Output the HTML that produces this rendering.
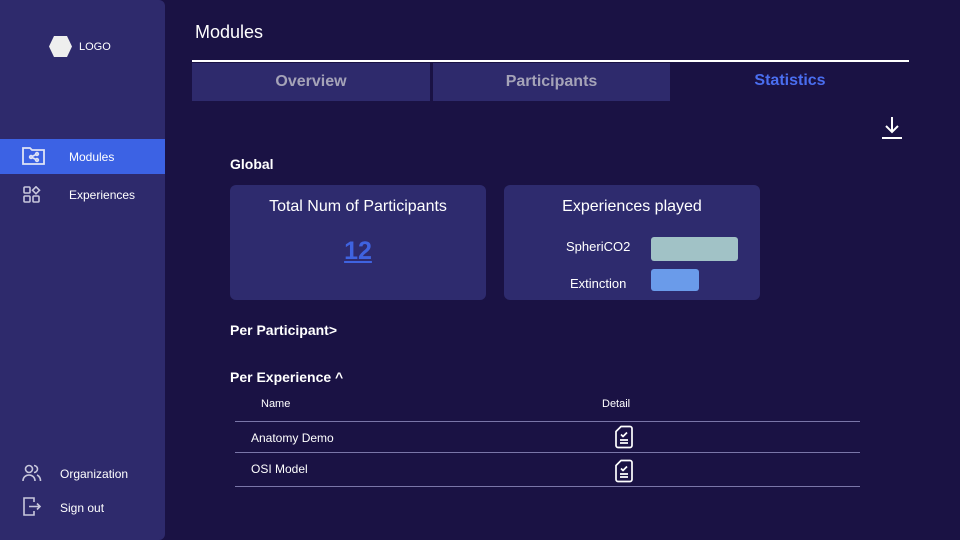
<!DOCTYPE html>
<html><head><style>
*{margin:0;padding:0;box-sizing:border-box}
body{width:960px;height:540px;background:#1a1244;font-family:"Liberation Sans",sans-serif;color:#fff;position:relative;overflow:hidden}
.abs{position:absolute}
.side{left:0;top:0;width:165px;height:540px;background:#2e2a6c;border-radius:0 6px 6px 0}
.t{position:absolute;white-space:nowrap}
.tab{position:absolute;top:63px;height:38px;background:#2e2a6c;color:#a5a3b8;font-weight:bold;font-size:16px;text-align:center;line-height:38px}
.card{position:absolute;top:185px;width:256px;height:115px;background:#2e2b6e;border-radius:6px}
.line{position:absolute;left:235px;width:625px;height:1px;background:#7a76a8}
</style></head><body>
<div class="abs side"></div>
<svg class="abs" style="left:48px;top:35px" width="25" height="23"><polygon points="6,1 19,1 24,11.5 19,22 6,22 1,11.5" fill="#eeeeee"/></svg>
<div class="t" style="left:79px;top:41px;font-size:11px">LOGO</div>
<div class="abs" style="left:0;top:139px;width:165px;height:35px;background:#3c62e4"></div>
<svg class="abs" style="left:22px;top:146px" width="24" height="20" fill="none" stroke="#dfe3f5" stroke-width="1.8"><path d="M1 2h7l2 2h12v14H1z"/><circle cx="9" cy="11" r="1.3"/><circle cx="15" cy="8" r="1.3"/><circle cx="15" cy="14" r="1.3"/><path d="M10 10.5l4-2M10 11.5l4 2"/></svg>
<div class="t" style="left:69px;top:150px;font-size:12px">Modules</div>
<svg class="abs" style="left:23px;top:186px" width="18" height="18" fill="none" stroke="#c8c7dc" stroke-width="1.6"><rect x="1" y="10" width="6" height="6" rx="1"/><rect x="10" y="10" width="6" height="6" rx="1"/><rect x="1" y="1" width="6" height="6" rx="1"/><path d="M13 0.8l3.5 3.5-3.5 3.5-3.5-3.5z"/></svg>
<div class="t" style="left:69px;top:188px;font-size:12px">Experiences</div>
<svg class="abs" style="left:22px;top:464px" width="20" height="18" fill="none" stroke="#c8c7dc" stroke-width="1.6"><circle cx="7" cy="5" r="3.5"/><path d="M1 17c0-4 3-6 6-6s6 2 6 6"/><path d="M12 1.5a3.5 3.5 0 0 1 0 7M15 11c2 1 3.5 3 3.5 6"/></svg>
<div class="t" style="left:60px;top:467px;font-size:12px">Organization</div>
<svg class="abs" style="left:22px;top:497px" width="20" height="20" fill="none" stroke="#c8c7dc" stroke-width="1.6"><path d="M12 5V1H2v17h10v-4"/><path d="M7 9.5h11M15 6.5l3 3-3 3"/></svg>
<div class="t" style="left:60px;top:501px;font-size:12px">Sign out</div>

<div class="t" style="left:195px;top:22px;font-size:18px">Modules</div>
<div class="abs" style="left:192px;top:60px;width:717px;height:1.5px;background:#fff"></div>
<div class="tab" style="left:192px;width:238px">Overview</div>
<div class="tab" style="left:433px;width:237px">Participants</div>
<div class="t" style="left:672px;width:236px;text-align:center;top:72px;font-size:16px;font-weight:bold;color:#4a6ef0">Statistics</div>
<svg class="abs" style="left:881px;top:116px" width="22" height="24" fill="none" stroke="#fff" stroke-width="2"><path d="M11 1v15M5 10l6 6 6-6M1 22h20"/></svg>

<div class="t" style="left:230px;top:156px;font-size:14px;font-weight:bold">Global</div>
<div class="card" style="left:230px"></div>
<div class="card" style="left:504px"></div>
<div class="t" style="left:230px;width:256px;text-align:center;top:198px;font-size:16px">Total Num of Participants</div>
<div class="t" style="left:230px;width:256px;text-align:center;top:237px;font-size:25px;font-weight:bold;color:#3f63e0;text-decoration:underline">12</div>
<div class="t" style="left:504px;width:256px;text-align:center;top:198px;font-size:16px">Experiences played</div>
<div class="t" style="left:566px;top:239px;font-size:13px">SpheriCO2</div>
<div class="abs" style="left:651px;top:237px;width:87px;height:24px;background:#a1c2c6;border-radius:3px"></div>
<div class="t" style="left:570px;top:276px;font-size:13px">Extinction</div>
<div class="abs" style="left:651px;top:269px;width:48px;height:22px;background:#6a9bea;border-radius:3px"></div>

<div class="t" style="left:230px;top:322px;font-size:14px;font-weight:bold">Per Participant&gt;</div>
<div class="t" style="left:230px;top:369px;font-size:14px;font-weight:bold">Per Experience ^</div>
<div class="t" style="left:261px;top:398px;font-size:11px">Name</div>
<div class="t" style="left:602px;top:398px;font-size:11px">Detail</div>
<div class="line" style="top:421px"></div>
<div class="line" style="top:452px"></div>
<div class="line" style="top:486px"></div>
<div class="t" style="left:251px;top:431px;font-size:12px">Anatomy Demo</div>
<div class="t" style="left:251px;top:462px;font-size:12px">OSI Model</div>
<svg class="abs" style="left:614px;top:425px" width="20" height="24" fill="none" stroke="#fff" stroke-width="1.7" stroke-linejoin="round"><path d="M7 1.5h9a2 2 0 0 1 2 2v17a2 2 0 0 1-2 2H4a2 2 0 0 1-2-2V6.5z"/><path d="M7 9.5l2 2 4-4M6 15h8M6 18h8"/></svg>
<svg class="abs" style="left:614px;top:459px" width="20" height="24" fill="none" stroke="#fff" stroke-width="1.7" stroke-linejoin="round"><path d="M7 1.5h9a2 2 0 0 1 2 2v17a2 2 0 0 1-2 2H4a2 2 0 0 1-2-2V6.5z"/><path d="M7 9.5l2 2 4-4M6 15h8M6 18h8"/></svg>
</body></html>
